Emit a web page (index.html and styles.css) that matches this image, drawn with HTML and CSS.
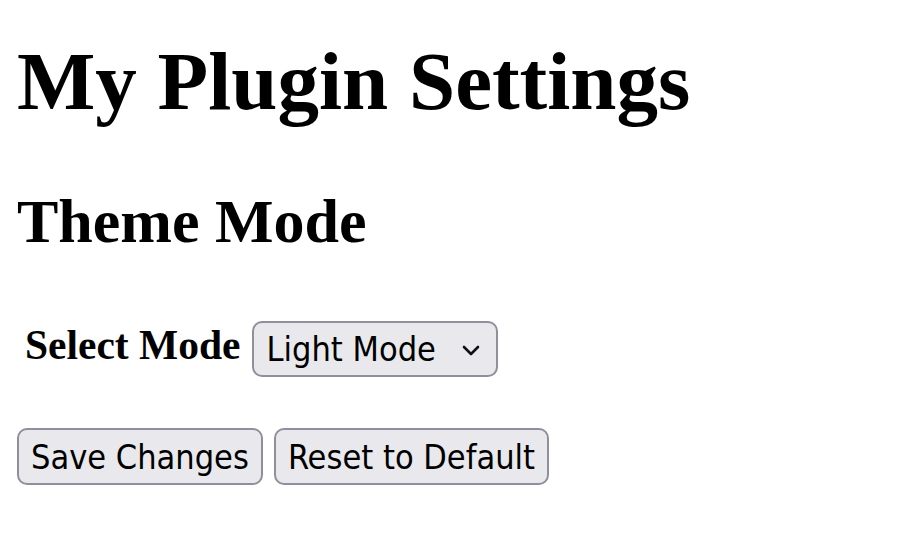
FILE: index.html
```html
<!DOCTYPE html>
<html lang="en">
<head>
<meta charset="utf-8">
<title>My Plugin Settings</title>
<link rel="stylesheet" href="styles.css">
</head>
<body>
<main class="page">
  <h1 class="title">My Plugin Settings</h1>
  <h2 class="section-title">Theme Mode</h2>
  <div class="field-row">
    <label class="field-label" for="mode">Select Mode</label>
    <div class="select-wrap">
      <select id="mode" class="select">
        <option>Light Mode</option>
        <option>Dark Mode</option>
      </select>
      <svg class="chevron" width="18" height="11" viewBox="0 0 18 11" aria-hidden="true">
        <polyline points="2,2 9,9 16,2" fill="none" stroke="#111" stroke-width="2.6" stroke-linecap="round" stroke-linejoin="round"/>
      </svg>
    </div>
  </div>
  <div class="actions">
    <button class="btn" type="button">Save Changes</button>
    <button class="btn" type="button">Reset to Default</button>
  </div>
</main>
</body>
</html>
```

FILE: styles.css
```css
html, body {
  margin: 0;
  padding: 0;
  background: #ffffff;
}

body {
  font-family: "Liberation Serif", "Times New Roman", serif;
  color: #000000;
}

.page {
  display: flex;
  flex-direction: column;
  align-items: flex-start;
  padding: 0 0 0 17px;
}

.title {
  margin: 40px 0 0 0;
  font-size: 83px;
  line-height: 1;
  font-weight: bold;
}

.section-title {
  margin: 67px 0 0 0;
  font-size: 62px;
  line-height: 1;
  font-weight: bold;
}

.field-row {
  display: flex;
  align-items: center;
  gap: 12px;
  margin-top: 69px;
  height: 56px;
}

.field-label {
  margin: 0 0 6px 8px;
  font-size: 41.5px;
  line-height: 1;
  font-weight: bold;
}

.select-wrap {
  position: relative;
  display: flex;
}

.select {
  appearance: none;
  -webkit-appearance: none;
  box-sizing: border-box;
  width: 246px;
  height: 56px;
  margin: 0;
  padding: 0 50px 0 12px;
  border: 2px solid #8f8f9d;
  border-radius: 10px;
  background: #e9e9ed;
  color: #000000;
  font-family: "DejaVu Sans Condensed", "Noto Sans", sans-serif;
  font-size: 34px;
  line-height: normal;
}

.chevron {
  position: absolute;
  right: 18px;
  top: 24px;
  pointer-events: none;
}

.actions {
  display: flex;
  gap: 11px;
  margin-top: 51px;
}

.btn {
  box-sizing: border-box;
  height: 57px;
  margin: 0;
  padding: 0 12px;
  border: 2px solid #8f8f9d;
  border-radius: 10px;
  background: #e9e9ed;
  color: #000000;
  font-family: "DejaVu Sans Condensed", "Noto Sans", sans-serif;
  font-size: 34px;
  line-height: normal;
}
```
